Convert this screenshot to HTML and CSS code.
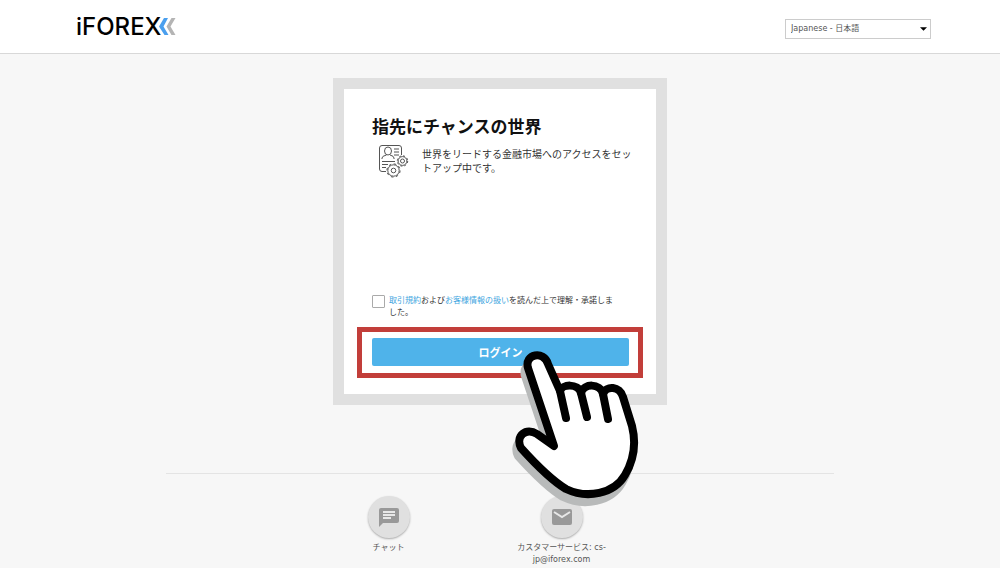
FILE: index.html
```html
<!DOCTYPE html>
<html lang="ja">
<head>
<meta charset="utf-8">
<meta name="viewport" content="width=device-width, initial-scale=1">
<title>iFOREX</title>
<link rel="stylesheet" href="styles.css">
</head>
<body>
<header class="header">
  <a class="logo" href="#" aria-label="iFOREX">
    <span class="logo-text">iFOREX</span>
    <svg class="logo-mark" width="17" height="17" viewBox="0 0 17 17">
      <path d="M5 0h4L4.500 8.500l5 8.500h-4L0 8.500z" fill="#4a9fee"/>
      <path d="M12.500 0h4L11.500 8.500l5 8.500h-4L7.500 8.500z" fill="#b4b4b4"/>
    </svg>
  </a>
  <div class="language">
    <select class="language-select" aria-label="Language">
      <option>Japanese - 日本語</option>
    </select>
    <svg class="language-arrow" width="7" height="4" viewBox="0 0 8 4"><path d="M0 0h8L4 4z"/></svg>
  </div>
</header>

<main class="main">
  <form class="card">
    <h1 class="title">指先にチャンスの世界</h1>
    <div class="intro">
      <svg class="intro-icon" width="32" height="34" viewBox="0 0 32 34" fill="none" stroke="#555" stroke-width="1">
        <path d="M8 27.500H4q-2.500 0-2.500-2.500V4Q1.500 1.500 4 1.500h17q2.500 0 2.500 2.500v7"/>
        <ellipse cx="10" cy="7" rx="3.500" ry="4"/>
        <path d="M4 15v-1q0-2 4.500-3M12 11q4 1 4 3v1M16 5h5M16 8h5M16 11h5M4 17.500h13M4 20.500h6M4 23.500h4"/>
        <circle cx="24.500" cy="17" r="2"/>
        <circle cx="24.500" cy="17" r="5.200" stroke-dasharray="2.040 2.040"/>
        <circle cx="24.500" cy="17" r="4.400"/>
        <circle cx="15.500" cy="26.500" r="2.300"/>
        <circle cx="15.500" cy="26.500" r="6.600" stroke-dasharray="2.590 2.590"/>
        <circle cx="15.500" cy="26.500" r="5.700"/>
      </svg>
      <p class="intro-text">世界をリードする金融市場へのアクセスをセットアップ中です。</p>
    </div>
    <div class="terms">
      <input class="terms-check" type="checkbox" id="terms">
      <label class="terms-text" for="terms"><a href="#">取引規約</a><span>および</span><a href="#">お客様情報の扱い</a><span>を読んだ上で理解・承諾しました。</span></label>
    </div>
    <div class="login">
      <button class="login-button" type="button">ログイン</button>
      <div class="login-highlight"></div>
      <svg class="hand" width="130" height="164" viewBox="0 0 130 164" stroke-linejoin="round" stroke-linecap="round">
        <path class="hand-shadow" transform="translate(-3 8)" d="M42 100L16 22C12 8 32 4 36 18L48 45C50 38 66 37 69 47C72 37 88 37 91 48C94 39 108 40 111 51L120 80C124 96 123 112 113 129C102 148 75 153 54 143C44 137 27 122 9 102C3 90 14 81 25 88Z"/>
        <path class="hand-shape" d="M42 100L16 22C12 8 32 4 36 18L48 45C50 38 66 37 69 47C72 37 88 37 91 48C94 39 108 40 111 51L120 80C124 96 123 112 113 129C102 148 75 153 54 143C44 137 27 122 9 102C3 90 14 81 25 88Z"/>
        <path class="hand-lines" d="M48 45L54 72M69 47L75 71M91 48L96 73"/>
      </svg>
    </div>
  </form>
</main>

<footer class="footer">
  <a class="contact" href="#">
    <span class="contact-icon">
      <svg width="20" height="20" viewBox="0 0 20 20">
        <path d="M2 1h16q2 0 2 2v11q0 2-2 2H4l-4 4V3q0-2 2-2z" fill="#999"/>
        <path d="M4 4h12v2H4zM4 7h12v2H4zM4 10h8v2H4z" fill="#e8e8e8"/>
      </svg>
    </span>
    <span class="contact-label">チャット</span>
  </a>
  <a class="contact" href="#">
    <span class="contact-icon">
      <svg width="20" height="20" viewBox="0 0 20 20">
        <rect y="2" width="20" height="16" rx="2" fill="#999"/>
        <path d="M2 5l8 5 8-5" fill="none" stroke="#e8e8e8" stroke-width="2"/>
      </svg>
    </span>
    <span class="contact-label">カスタマーサービス: cs-jp@iforex.com</span>
  </a>
</footer>
</body>
</html>
```

FILE: styles.css
```css
* {
  box-sizing: border-box;
}
body {
  margin: 0;
  background: #f7f7f7;
  color: #333;
  font-family: "DejaVu Sans", "Noto Sans CJK JP", sans-serif;
  font-size: 8px;
  line-height: 12px;
}
a {
  color: #3ea5e0;
  text-decoration: none;
}
.header {
  display: flex;
  justify-content: space-between;
  align-items: center;
  height: 54px;
  padding: 4px 69px 0 76px;
  background: #fff;
  border-bottom: 1px solid #d8d8d8;
}
.logo {
  display: flex;
  align-items: center;
  margin-bottom: 4px;
}
.logo-text {
  color: #000;
  font-family: Inter, sans-serif;
  font-size: 24px;
  font-weight: 500;
  line-height: 24px;
}
.logo-mark {
  margin-left: -2px;
}
.language {
  position: relative;
  width: 146px;
}
.language-select {
  display: block;
  width: 100%;
  height: 20px;
  padding: 0 5px;
  border: 1px solid #ccc;
  border-radius: 0;
  background: #fff;
  color: #555;
  font: inherit;
  appearance: none;
}
.language-arrow {
  position: absolute;
  top: 8px;
  right: 4px;
  pointer-events: none;
}

/* login card */
.main {
  padding: 24px 20px 0;
}
.card {
  display: flex;
  flex-direction: column;
  max-width: 334px;
  min-height: 327px;
  margin: 0 auto;
  padding: 27px 27px 28px 28px;
  border: 11px solid #e0e0e0;
  background: #fff;
  font-family: "Noto Sans CJK JP", sans-serif;
}
.title {
  margin: 0;
  color: #111;
  font-size: 17px;
  font-weight: bold;
  line-height: 20px;
}
.intro {
  display: flex;
  gap: 12px;
  margin: 8px -6px 0 6px;
}
.intro-icon {
  flex: none;
}
.intro-text {
  margin: 3px 0 0;
  font-size: 10px;
  line-height: 14px;
}
.terms {
  display: flex;
  gap: 4px;
  margin-top: auto;
}
.terms-check {
  flex: none;
  width: 13px;
  height: 13px;
  margin: 1px 0 0;
  border: 1px solid #aaa;
  border-radius: 1px;
  background: #fff;
  appearance: none;
}
.terms-check:checked {
  background: #4fb3ea;
}
.terms-text {
  max-width: 230px;
}
.login {
  position: relative;
  margin-top: 20px;
}
.login-button {
  display: block;
  width: 100%;
  height: 28px;
  padding: 0;
  border: 0;
  border-radius: 2px;
  background: #4fb3ea;
  color: #fff;
  font-family: inherit;
  font-size: 11px;
  font-weight: bold;
}
.login-highlight {
  position: absolute;
  inset: -11px -14px -12px -15px;
  border: 5px solid #c23e3a;
  pointer-events: none;
}
.hand {
  position: absolute;
  top: 8px;
  left: 140px;
  z-index: 1;
  pointer-events: none;
}
.hand-shadow {
  fill: #b8baba;
  stroke: #b8baba;
  stroke-width: 8px;
}
.hand-shape {
  fill: #fff;
  stroke: #000;
  stroke-width: 8px;
}
.hand-lines {
  fill: none;
  stroke: #000;
  stroke-width: 8px;
}

/* contact links */
.footer {
  display: flex;
  max-width: 668px;
  margin: 68px auto 0;
  padding: 22px 0 0 136px;
  border-top: 1px solid #e4e4e4;
}
.contact {
  display: flex;
  flex-direction: column;
  align-items: center;
  width: 173px;
  color: #555;
  text-align: center;
}
.contact-icon {
  display: flex;
  justify-content: center;
  align-items: center;
  width: 42px;
  height: 42px;
  border-radius: 50%;
  background: #e0e0e0;
  box-shadow: 0 1px 2px #aaa;
}
.contact-label {
  width: 92px;
  margin-top: 4px;
}
```
